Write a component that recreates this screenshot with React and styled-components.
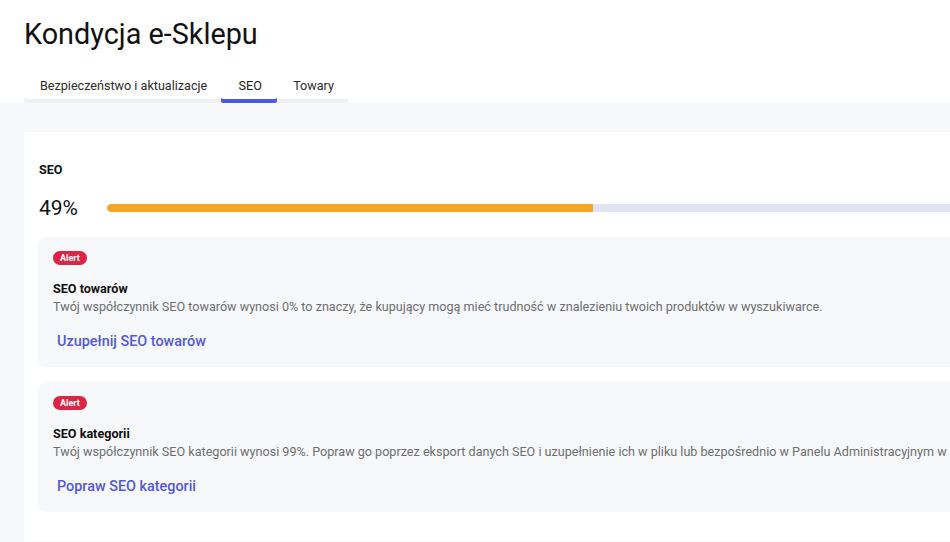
import React from "react";
import styled, { createGlobalStyle } from "styled-components";

const Global = createGlobalStyle`
  html, body { margin: 0; padding: 0; background: #ffffff; overflow: hidden; }
  body { font-family: Roboto, "Liberation Sans", Arial, sans-serif; color: #111; }
  * { box-sizing: border-box; }
`;

const Header = styled.header`
  padding: 18px 24px 0 24px;
  background: #fff;
`;

const Title = styled.h1`
  margin: 0;
  font-size: 28.8px;
  line-height: 33px;
  font-weight: 400;
  color: #111;
`;

const TabBar = styled.nav`
  margin-top: 18px;
  display: inline-flex;
  box-shadow: inset 0 -4px 0 #f0f0f0;
  border-radius: 0 0 2px 2px;
`;

const Tab = styled.div`
  min-width: 56px;
  padding: 9px 14px 9px 16px;
  text-align: center;
  font-size: 12.6px;
  line-height: 16px;
  color: ${(p) => (p.$active ? "#1a1a1a" : "#2b2b2b")};
  border-radius: 2px;
  box-shadow: ${(p) => (p.$active ? "inset 0 -4px 0 #4b5ae0" : "none")};
  cursor: pointer;
`;

const Main = styled.main`
  background: #f7f8fa;
  padding: 29px 0 1px 24px;
  min-height: calc(100vh - 103px);
`;

const Card = styled.section`
  width: 1088px;
  background: #fff;
  padding: 30px 14px 29px;
`;

const SectionLabel = styled.div`
  font-size: 12.6px;
  line-height: 16px;
  font-weight: 700;
  padding-left: 1px;
  color: #111;
`;

const ScoreRow = styled.div`
  margin-top: 18px;
  display: flex;
  align-items: center;
  gap: 29px;
  height: 24px;
  padding-left: 1px;
`;

const Score = styled.span`
  font-size: 21px;
  line-height: 24px;
  color: #111;
  width: 39px;
  flex: none;
  white-space: nowrap;
`;

const Track = styled.div`
  flex: 1;
  height: 8px;
  background: #e3e3f8;
  border-radius: 4px 0 0 4px;
  overflow: hidden;
`;

const Fill = styled.div`
  height: 100%;
  background: #f5a623;
  border-radius: 4px 0 0 4px;
`;

const AlertBox = styled.div`
  margin-top: ${(p) => p.$gap}px;
  background: #f7f8fa;
  border-radius: 8px;
  padding: 14px 15px 15px;
`;

const Badge = styled.span`
  display: flex;
  align-items: center;
  width: fit-content;
  height: 14px;
  padding: 0 7px;
  border-radius: 7px;
  background: #dc2545;
  color: #fff;
  font-size: 9px;
  font-weight: 700;
  line-height: 14px;
`;

const AlertTitle = styled.div`
  margin-top: 16px;
  font-size: 12.6px;
  line-height: 16px;
  font-weight: 700;
  color: #111;
`;

const AlertText = styled.div`
  margin-top: 2px;
  font-size: 12.6px;
  line-height: 16px;
  color: #6e6e6e;
  white-space: nowrap;
`;

const ActionLink = styled.a`
  display: inline-block;
  margin-top: 17px;
  padding-left: 4px;
  font-size: 14.4px;
  line-height: 20px;
  font-weight: 500;
  color: #5159d8;
  text-decoration: none;
  cursor: pointer;
`;

const alerts = [
  {
    title: "SEO towarów",
    text: "Twój współczynnik SEO towarów wynosi 0% to znaczy, że kupujący mogą mieć trudność w znalezieniu twoich produktów w wyszukiwarce.",
    action: "Uzupełnij SEO towarów",
  },
  {
    title: "SEO kategorii",
    text: "Twój współczynnik SEO kategorii wynosi 99%. Popraw go poprzez eksport danych SEO i uzupełnienie ich w pliku lub bezpośrednio w Panelu Administracyjnym w zakładce Kategorie.",
    action: "Popraw SEO kategorii",
  },
];

export default function App() {
  const score = 49;
  return (
    <>
      <Global />
      <Header>
        <Title>Kondycja e-Sklepu</Title>
        <TabBar>
          <Tab>Bezpieczeństwo i aktualizacje</Tab>
          <Tab $active>SEO</Tab>
          <Tab>Towary</Tab>
        </TabBar>
      </Header>
      <Main>
        <Card>
          <SectionLabel>SEO</SectionLabel>
          <ScoreRow>
            <Score>{score}%</Score>
            <Track>
              <Fill style={{ width: `${score}%` }} />
            </Track>
          </ScoreRow>
          {alerts.map((a, i) => (
            <AlertBox key={a.title} $gap={i === 0 ? 17 : 15}>
              <Badge>Alert</Badge>
              <AlertTitle>{a.title}</AlertTitle>
              <AlertText>{a.text}</AlertText>
              <ActionLink>{a.action}</ActionLink>
            </AlertBox>
          ))}
        </Card>
      </Main>
    </>
  );
}
